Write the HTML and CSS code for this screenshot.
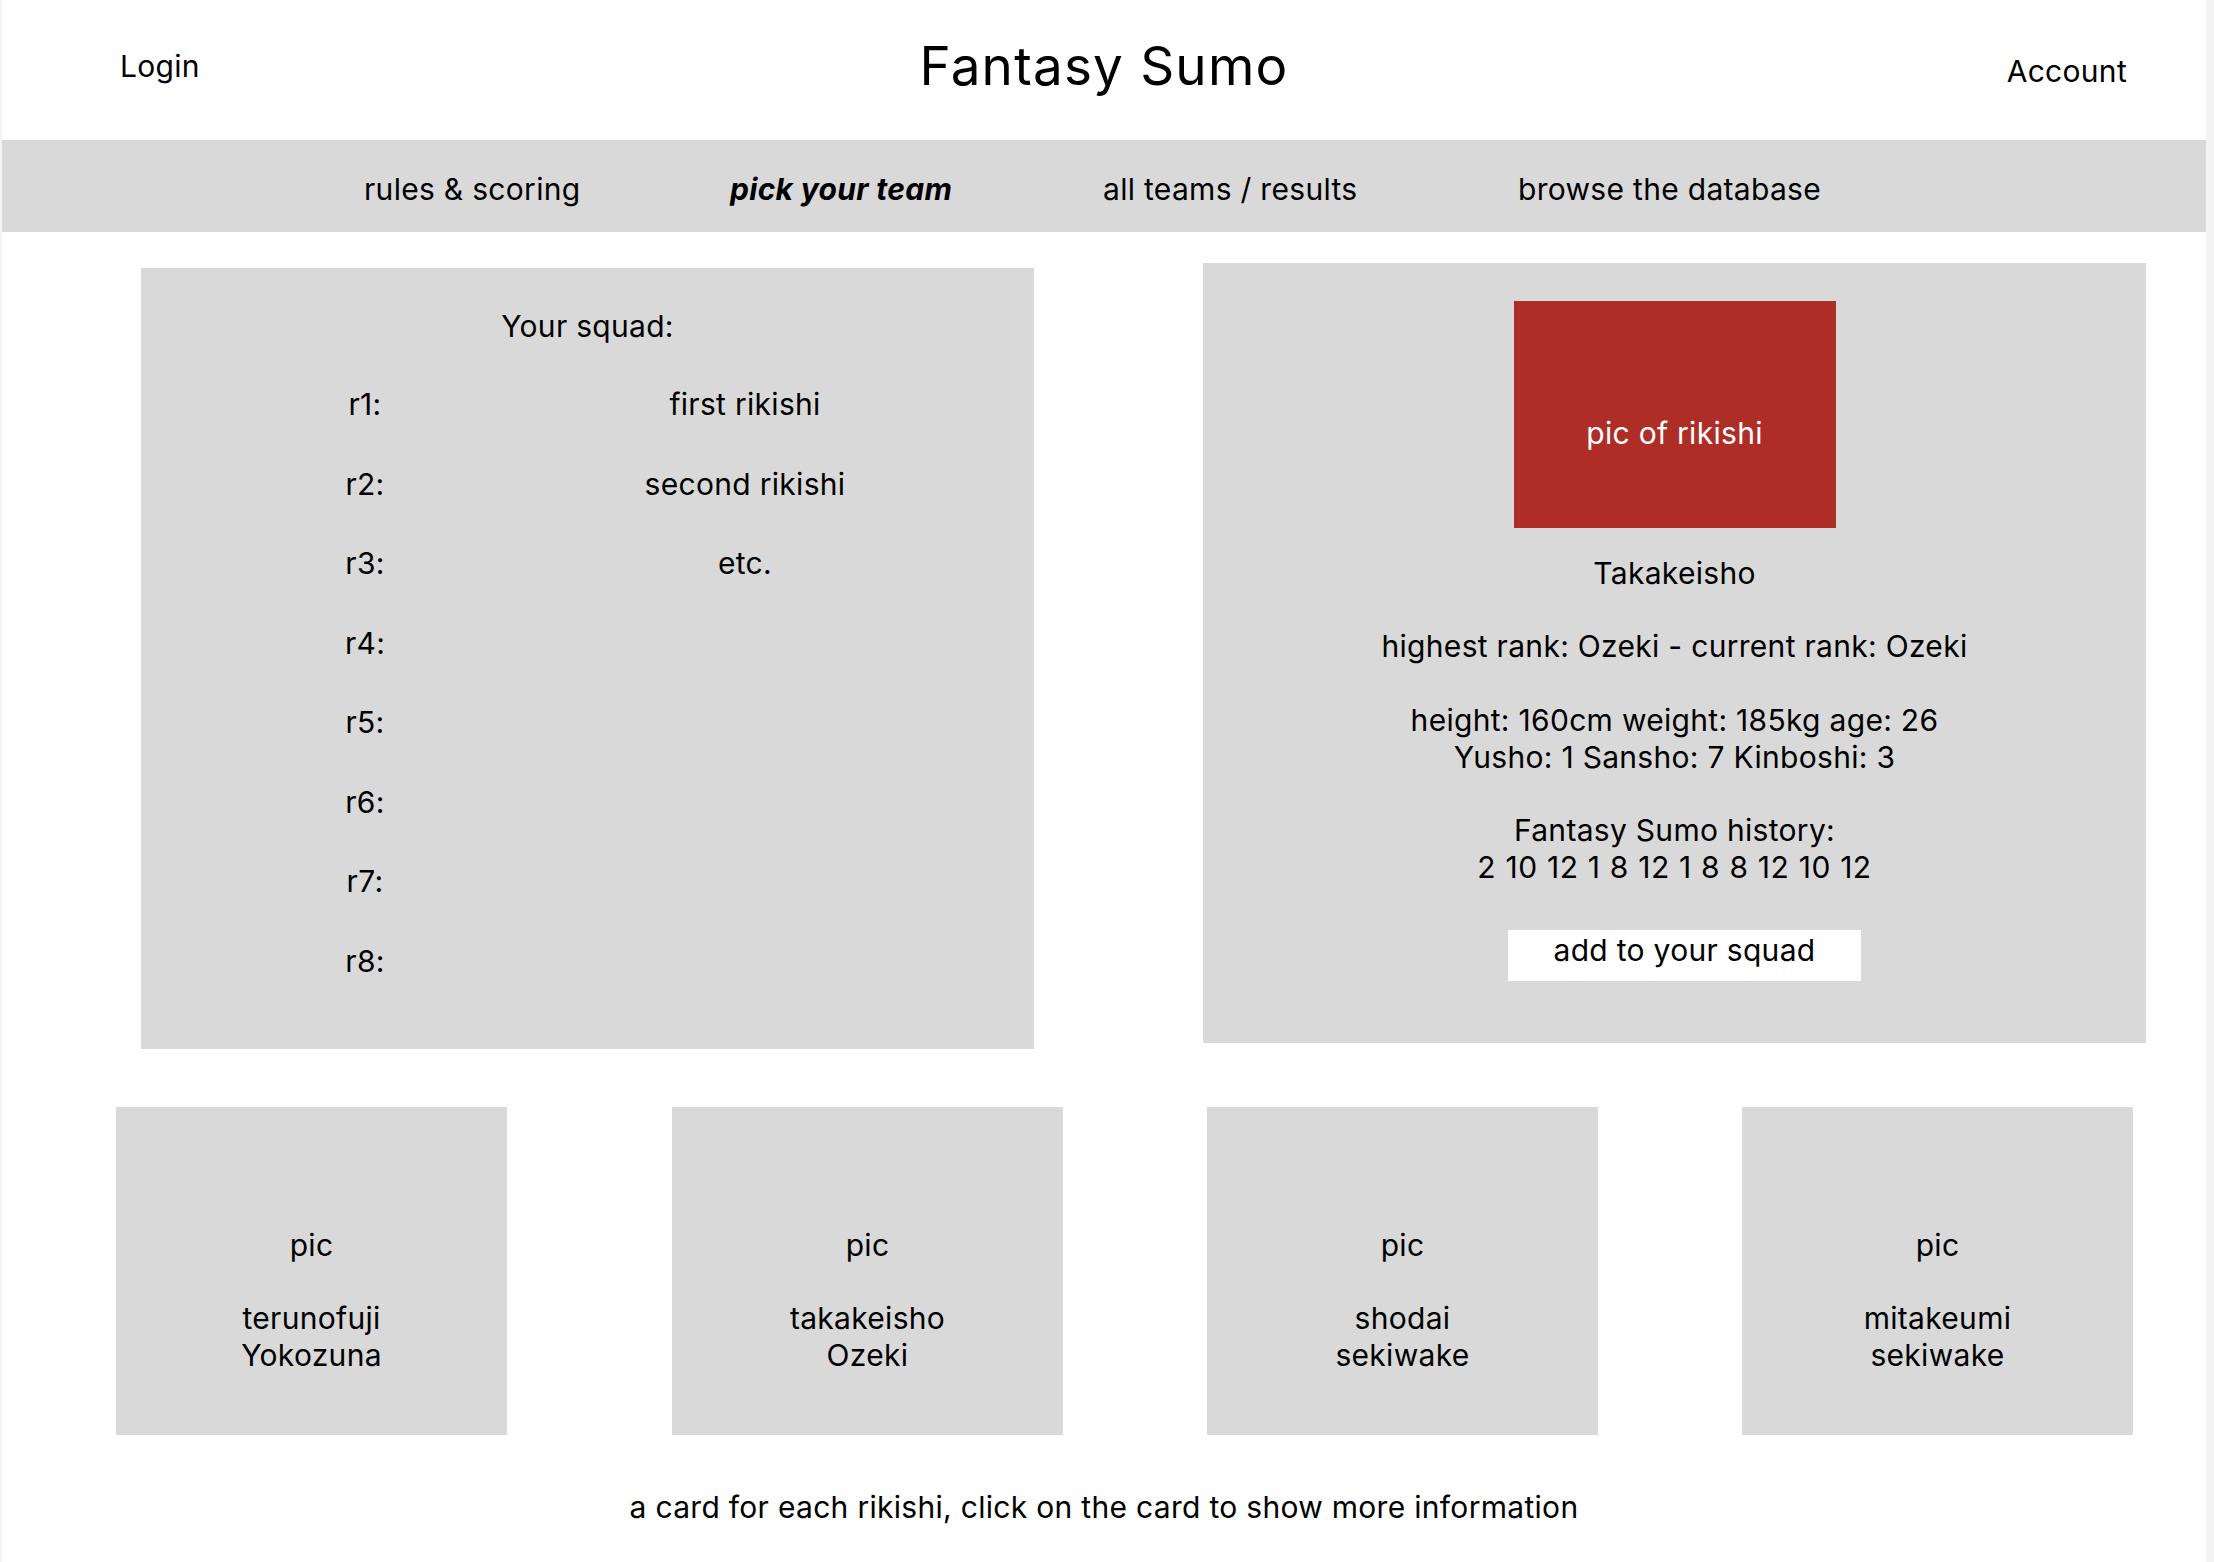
FILE: index.html
```html
<!DOCTYPE html>
<html lang="en">
<head>
<meta charset="utf-8">
<title>Fantasy Sumo</title>
<link rel="stylesheet" href="styles.css">
</head>
<body>
<div class="frame">
  <header class="header">
    <a class="login">Login</a>
    <h1 class="title">Fantasy Sumo</h1>
    <a class="account">Account</a>
  </header>
  <nav class="nav">
    <span class="nav-item nav-rules">rules &amp; scoring</span>
    <span class="nav-item nav-pick active">pick your team</span>
    <span class="nav-item nav-all">all teams / results</span>
    <span class="nav-item nav-browse">browse the database</span>
  </nav>
  <main class="main">
    <section class="squad">
      <div class="squad-title">Your squad:</div>
      <div class="squad-grid">
        <div class="slot">r1:</div><div class="pick">first rikishi</div>
        <div class="slot">r2:</div><div class="pick">second rikishi</div>
        <div class="slot">r3:</div><div class="pick">etc.</div>
        <div class="slot">r4:</div><div class="pick"></div>
        <div class="slot">r5:</div><div class="pick"></div>
        <div class="slot">r6:</div><div class="pick"></div>
        <div class="slot">r7:</div><div class="pick"></div>
        <div class="slot">r8:</div><div class="pick"></div>
      </div>
    </section>
    <section class="detail">
      <div class="detail-pic">pic of rikishi</div>
      <div class="detail-text">
        <p class="line">Takakeisho</p>
        <p class="line">&nbsp;</p>
        <p class="line">highest rank: Ozeki - current rank: Ozeki</p>
        <p class="line">&nbsp;</p>
        <p class="line">height: 160cm weight: 185kg age: 26</p>
        <p class="line">Yusho: 1 Sansho: 7 Kinboshi: 3</p>
        <p class="line">&nbsp;</p>
        <p class="line">Fantasy Sumo history:</p>
        <p class="line history">2 10 12 1 8 12 1 8 8 12 10 12</p>
      </div>
      <button class="add-btn">add to your squad</button>
    </section>
  </main>
  <section class="cards">
    <div class="card card-first">
      <p class="line">pic</p>
      <p class="line">&nbsp;</p>
      <p class="line">terunofuji</p>
      <p class="line">Yokozuna</p>
    </div>
    <div class="card">
      <p class="line">pic</p>
      <p class="line">&nbsp;</p>
      <p class="line">takakeisho</p>
      <p class="line">Ozeki</p>
    </div>
    <div class="card">
      <p class="line">pic</p>
      <p class="line">&nbsp;</p>
      <p class="line">shodai</p>
      <p class="line">sekiwake</p>
    </div>
    <div class="card">
      <p class="line">pic</p>
      <p class="line">&nbsp;</p>
      <p class="line">mitakeumi</p>
      <p class="line">sekiwake</p>
    </div>
  </section>
  <footer class="note">a card for each rikishi, click on the card to show more information</footer>
</div>
</body>
</html>
```

FILE: styles.css
```css
html, body {
  margin: 0;
  padding: 0;
}
body {
  background: #f4f4f4;
  font-family: Inter, "Liberation Sans", sans-serif;
  color: #000;
  font-size: 30px;
  letter-spacing: 0.3px;
}
.frame {
  width: 2204px;
  height: 1562px;
  margin-left: 2px;
  background: #fff;
  overflow: hidden;
}
.header {
  display: grid;
  grid-template-columns: 1fr auto 1fr;
  height: 140px;
  align-items: start;
}
.login {
  justify-self: start;
  margin-left: 118px;
  margin-top: 48px;
  font-size: 30px;
  line-height: 36px;
}
.title {
  margin: 34px 0 0 0;
  font-size: 53px;
  font-weight: 400;
  letter-spacing: 1.2px;
  line-height: 64px;
}
.account {
  justify-self: end;
  margin-right: 79px;
  margin-top: 53px;
  font-size: 30px;
  line-height: 36px;
}
.nav {
  height: 92px;
  background: #d9d9d9;
  display: flex;
  align-items: center;
  box-sizing: border-box;
  padding-top: 5px;
  padding-left: 362px;
}
.nav-item {
  line-height: 36px;
  white-space: nowrap;
}
.nav-rules { width: 366px; }
.nav-pick { width: 373px; }
.nav-all { width: 415px; }
.active {
  font-weight: 700;
  font-style: italic;
}
.main {
  display: flex;
  align-items: flex-start;
  padding-left: 139px;
  gap: 169px;
}
.squad {
  width: 893px;
  height: 781px;
  margin-top: 36px;
  background: #d9d9d9;
  box-sizing: border-box;
  padding-top: 40px;
}
.squad-title {
  text-align: center;
  line-height: 36px;
}
.squad-grid {
  display: grid;
  grid-template-columns: 80px 680px;
  grid-auto-rows: 79.5px;
  padding-left: 184px;
  margin-top: 42px;
}
.slot, .pick {
  text-align: center;
  line-height: 36px;
}
.detail {
  width: 943px;
  height: 780px;
  margin-top: 31px;
  background: #d9d9d9;
  box-sizing: border-box;
  padding-top: 38px;
  display: flex;
  flex-direction: column;
  align-items: center;
}
.detail-pic {
  width: 322px;
  height: 227px;
  box-sizing: border-box;
  padding-top: 36px;
  background: #ae2e27;
  color: #fff;
  display: flex;
  align-items: center;
  justify-content: center;
}
.detail-text {
  margin-top: 27px;
  text-align: center;
}
.line {
  margin: 0;
  line-height: 36.7px;
  white-space: nowrap;
}
.history {
  word-spacing: 0.4px;
  letter-spacing: 0.5px;
}
.add-btn {
  margin-top: 45px;
  margin-left: 20px;
  width: 353px;
  height: 51px;
  border: 0;
  background: #fff;
  font-family: inherit;
  font-size: 30px;
  letter-spacing: inherit;
  color: #000;
  padding: 2px 0 0 0;
  line-height: 36px;
  display: flex;
  justify-content: center;
  align-items: flex-start;
}
.cards {
  display: flex;
  margin-top: 58px;
  padding-left: 114px;
  gap: 144px;
}
.card {
  width: 391px;
  height: 328px;
  background: #d9d9d9;
  box-sizing: border-box;
  padding-top: 120px;
  text-align: center;
}
.card-first {
  margin-right: 21px;
}
.note {
  margin-top: 54px;
  text-align: center;
  line-height: 36px;
}
```
